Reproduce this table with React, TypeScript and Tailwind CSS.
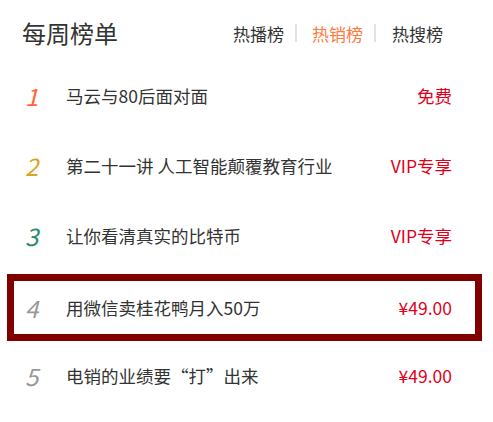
const ROWS = [
  { no: '1', color: 'text-[#ff6633]', title: '马云与80后面对面', price: '免费' },
  { no: '2', color: 'text-[#d9a520]', title: '第二十一讲 人工智能颠覆教育行业', price: 'VIP专享' },
  { no: '3', color: 'text-[#2e8b6e]', title: '让你看清真实的比特币', price: 'VIP专享' },
  { no: '4', color: 'text-[#999999]', title: '用微信卖桂花鸭月入50万', price: '¥49.00', active: true },
  { no: '5', color: 'text-[#999999]', title: '电销的业绩要“打”出来', price: '¥49.00' },
]

const TABS = ['热播榜', '热销榜', '热搜榜']

export default function App() {
  return (
    <div
      className="h-[422px] w-[493px] bg-white text-[#333]"
      style={{ fontFamily: '"Noto Sans CJK SC", "Noto Sans", sans-serif' }}
    >
      <header className="flex h-[61px] items-center justify-between pl-[22px] pr-[50px] pt-[5px]">
        <h1 className="text-[24px] leading-none">每周榜单</h1>
        <nav className="flex items-center text-[17px] leading-none">
          {TABS.map((t, i) => (
            <div key={t} className="flex items-center">
              <span className={i === 1 ? 'text-[#ff7a3d]' : 'text-[#333]'}>{t}</span>
              {i < TABS.length - 1 && (
                <span className={i === 0 ? 'ml-[11px] mr-[15px] h-[18px] w-[2px] bg-[#e3e3e3]' : 'ml-[11px] mr-[16px] h-[18px] w-[2px] bg-[#e3e3e3]'} />
              )}
            </div>
          ))}
        </nav>
      </header>

      <ul>
        {ROWS.map((r) =>
          r.active ? (
            <li key={r.no} className="pt-[3px]">
              <div className="ml-[7px] mr-[11px] flex h-[67px] items-center border-[7px] border-[#800000] pl-[11px] pr-[23px]">
                <Row {...r} />
              </div>
            </li>
          ) : (
            <li key={r.no} className="ml-[7px] mr-[11px] flex h-[70px] items-center pl-[18px] pr-[30px]">
              <Row {...r} />
            </li>
          ),
        )}
      </ul>
    </div>
  )
}

function Row({ no, color, title, price }: { no: string; color: string; title: string; price: string }) {
  return (
    <>
      <span className={`w-[41px] text-[24px] italic leading-none ${color}`}>{no}</span>
      <span className="flex-1 text-[17.5px] leading-none">{title}</span>
      <span className="text-[17.5px] leading-none text-[#e0001b]">{price}</span>
    </>
  )
}
